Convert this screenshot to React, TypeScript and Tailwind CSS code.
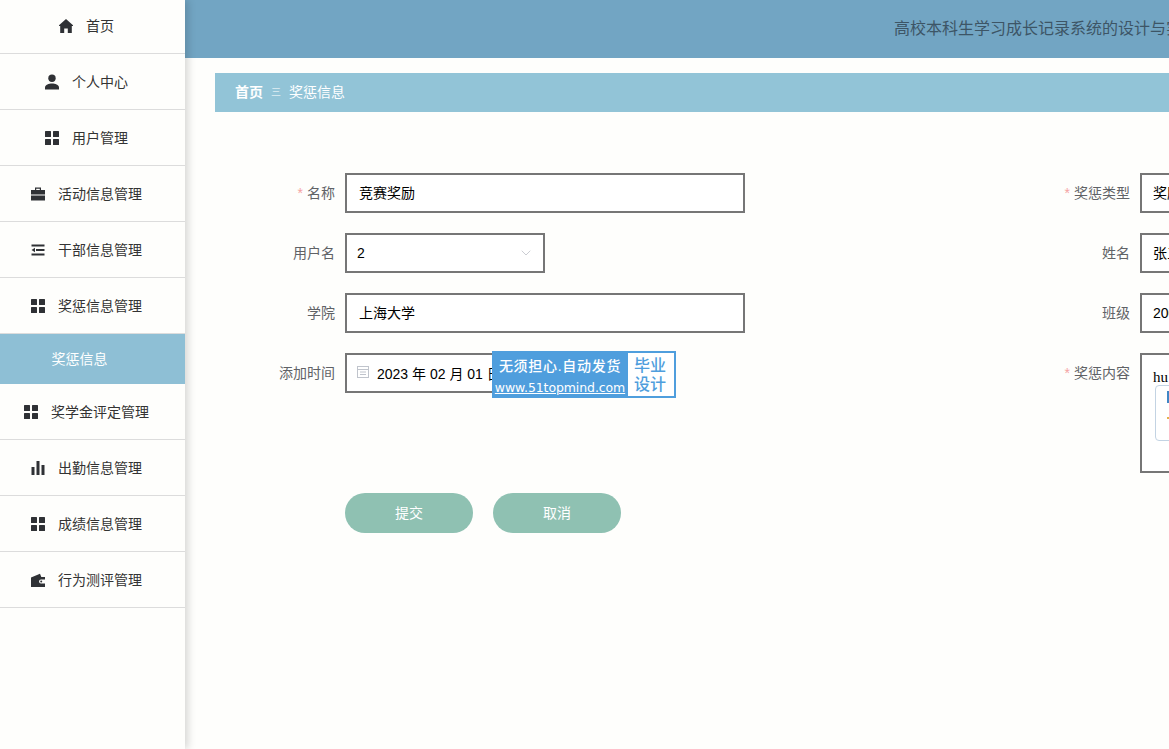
import type { ReactNode } from "react";
import { ChevronDown } from "lucide-react";

const ink = "#2f3135";

const Home = () => (
  <svg viewBox="0 0 16 16" className="h-4 w-4" fill={ink}>
    <path d="M8 1 1 7.200V8h1.200v7h4v-4.500h3.600V15h4V8H15v-.8z" />
  </svg>
);

const Person = () => (
  <svg viewBox="0 0 16 16" className="h-4 w-4" fill={ink}>
    <circle cx="8" cy="4.200" r="3.700" />
    <path d="M1 15.500v-2.200C1 10.600 5 9.400 8 9.400s7 1.200 7 3.900v2.200z" />
  </svg>
);

const Grid = () => (
  <svg viewBox="0 0 16 16" className="h-4 w-4" fill={ink}>
    <rect x="1" y="1" width="6" height="6" rx="0.5" />
    <rect x="9" y="1" width="6" height="6" rx="0.5" />
    <rect x="1" y="9" width="6" height="6" rx="0.5" />
    <rect x="9" y="9" width="6" height="6" rx="0.5" />
  </svg>
);

const Lines = () => (
  <svg viewBox="0 0 16 16" className="h-4 w-4" fill={ink}>
    <rect x="1.500" y="2.500" width="13" height="2" />
    <rect x="6" y="7" width="8.500" height="2" />
    <path d="M1.500 8l3.500-2.200v4.400z" />
    <rect x="1.500" y="11.500" width="13" height="2" />
  </svg>
);

const Bars = () => (
  <svg viewBox="0 0 16 16" className="h-4 w-4" fill={ink}>
    <rect x="1.500" y="7" width="3" height="8" />
    <rect x="6.500" y="1" width="3" height="14" />
    <rect x="11.500" y="5" width="3" height="10" />
  </svg>
);

const Wallet = () => (
  <svg viewBox="0 0 16 16" className="h-4 w-4" fill={ink}>
    <path fillRule="evenodd" d="M1 5.500 10 1.800l1.300 3.200H15v10H1zM15 7.500h-4a2 2 0 0 0 0 4h4z" />
    <circle cx="11.200" cy="9.500" r="1" />
  </svg>
);

const Case = () => (
  <svg viewBox="0 0 16 16" className="h-4 w-4" fill={ink}>
    <path d="M5 4V1.500h6V4H9.800V2.700H6.200V4z" />
    <rect x="1" y="4" width="14" height="4.500" />
    <rect x="1" y="9.500" width="14" height="5" />
  </svg>
);

const menu: { label: string; icon: ReactNode }[] = [
  { label: "首页", icon: <Home /> },
  { label: "个人中心", icon: <Person /> },
  { label: "用户管理", icon: <Grid /> },
  { label: "活动信息管理", icon: <Case /> },
  { label: "干部信息管理", icon: <Lines /> },
  { label: "奖惩信息管理", icon: <Grid /> },
];

const menuAfter: { label: string; icon: ReactNode }[] = [
  { label: "奖学金评定管理", icon: <Grid /> },
  { label: "出勤信息管理", icon: <Bars /> },
  { label: "成绩信息管理", icon: <Grid /> },
  { label: "行为测评管理", icon: <Wallet /> },
];

function MenuItem({ label, icon, first }: { label: string; icon: ReactNode; first?: boolean }) {
  return (
    <div className={`${first ? "h-[54px] pb-[2px]" : "h-[56px]"} flex w-[185px] overflow-hidden border-b border-[#dcdcdc]`}>
      <div className="flex w-[200px] shrink-0 items-center justify-center text-sm text-[#333333]">
        <span className="mr-[12px] ml-[-28px] flex w-4 items-center justify-center">{icon}</span>
        {label}
      </div>
    </div>
  );
}

function Field({
  label,
  required,
  children,
}: {
  label: string;
  required?: boolean;
  children: ReactNode;
}) {
  return (
    <div className="flex items-start">
      <div className="h-10 w-[130px] shrink-0 pr-[10px] text-right text-sm leading-10 text-[#606266]">
        {required && <span className="mr-1 text-[#f5a3a3]">*</span>}
        {label}
      </div>
      {children}
    </div>
  );
}

const inputBox = "flex h-10 items-center border-2 border-[#767676] bg-white text-sm text-black";

export default function App() {
  return (
    <div
      className="flex h-screen w-full overflow-hidden bg-[#fefefc]"
      style={{ fontFamily: '"Liberation Sans", "Noto Sans CJK SC", sans-serif' }}
    >
      <aside className="z-10 w-[185px] shrink-0 bg-[#fefefc] shadow-[3px_0_8px_rgba(0,0,0,0.16)]">
        {menu.map((m, i) => (
          <MenuItem key={m.label} label={m.label} icon={m.icon} first={i === 0} />
        ))}
        <div className="flex h-[50px] w-[185px] items-center overflow-hidden bg-[#8ebfd5]">
          <span className="w-[160px] shrink-0 pr-px text-center text-[14px] text-white">奖惩信息</span>
        </div>
        {menuAfter.map((m) => (
          <MenuItem key={m.label} label={m.label} icon={m.icon} />
        ))}
      </aside>

      <main className="relative min-w-0 flex-1 overflow-hidden">
        <header className="flex h-[58px] items-center overflow-hidden whitespace-nowrap bg-[#72a5c3] pl-[709px] text-base text-[#3d5566]">
          高校本科生学习成长记录系统的设计与实现
        </header>

        <div className="mt-[15px] ml-[30px] flex h-[39px] w-[1200px] items-center bg-[#92c4d7] pb-px pl-5 text-sm text-white">
          <span className="font-bold">首页</span>
          <span className="mx-[8px] w-[10px] pt-[2px] text-[10px] font-light">三</span>
          <span>奖惩信息</span>
        </div>

        <div className="ml-[30px] w-[1590px] pt-[61px]">
          <div className="grid grid-cols-[795px_795px] gap-y-5">
            <Field label="名称" required>
              <div className={`${inputBox} w-[400px] pl-3`}>竞赛奖励</div>
            </Field>
            <Field label="奖惩类型" required>
              <div className={`${inputBox} w-[400px] pl-[11px]`}>奖励</div>
            </Field>

            <Field label="用户名">
              <div className={`${inputBox} w-[200px] justify-between pr-[9px] pl-[10px]`}>
                <span>2</span>
                <ChevronDown size={16} strokeWidth={1} color="#b0b4bc" />
              </div>
            </Field>
            <Field label="姓名">
              <div className={`${inputBox} w-[400px] pl-[11px]`}>张三</div>
            </Field>

            <Field label="学院">
              <div className={`${inputBox} w-[400px] pl-3`}>上海大学</div>
            </Field>
            <Field label="班级">
              <div className={`${inputBox} w-[400px] pl-[11px]`}>2001</div>
            </Field>

            <Field label="添加时间">
              <div className={`${inputBox} w-[200px] overflow-hidden whitespace-nowrap pl-[9px]`}>
                <svg viewBox="0 0 14 14" className="mr-[7px] mb-[3px] h-[14px] w-[14px] shrink-0" fill="none" stroke="#c0c4cc">
                  <rect x="1.500" y="1.500" width="11" height="11" />
                  <path d="M1.500 4.500h11M4 7h6M4 9.500h6" />
                </svg>
                <span className="pt-px">2023 年 02 月 01 日</span>
              </div>
            </Field>
            <Field label="奖惩内容" required>
              <div className="h-[120px] w-[400px] border-2 border-[#767676] bg-white pt-[15px] pl-[11px]">
                <div className="font-['Liberation_Serif',serif] text-[15px] leading-[15px] text-black">hu</div>
                <div className="ml-[2px] flex h-[56px] w-[200px] flex-col rounded border border-[#c3d3e3] pt-[5px] pl-[11px]">
                  <div className="h-3 w-[3px] bg-[#3f86c6]" />
                  <div className="mt-[14px] h-[2px] w-[3px] bg-[#e6b04a]" />
                </div>
              </div>
            </Field>
          </div>

          <div className="mt-5 ml-[130px] flex gap-5">
            <button className="h-10 w-32 rounded-[20px] bg-[#8fc1b2] text-sm text-white">提交</button>
            <button className="h-10 w-32 rounded-[20px] bg-[#8fc1b2] text-sm text-white">取消</button>
          </div>
        </div>

        <div className="absolute top-[351px] left-[307px] flex h-[47px] w-[184px] bg-[#4f9edd] text-white">
          <div className="flex w-[136px] shrink-0 flex-col items-center whitespace-nowrap pt-[4px]">
            <span className="text-sm leading-[22px] font-medium tracking-[0.7px]">无须担心.自动发货</span>
            <span className="mt-[2px] font-['DejaVu_Sans',sans-serif] text-[12.5px] leading-[18px] font-medium tracking-[-0.1px] underline">
              www.51topmind.com
            </span>
          </div>
          <div className="my-[2px] flex w-[46px] flex-col items-center justify-center bg-white pr-[2px] text-base leading-[19px] font-medium text-[#4f9edd]">
            <span>毕业</span>
            <span>设计</span>
          </div>
        </div>
      </main>
    </div>
  );
}
